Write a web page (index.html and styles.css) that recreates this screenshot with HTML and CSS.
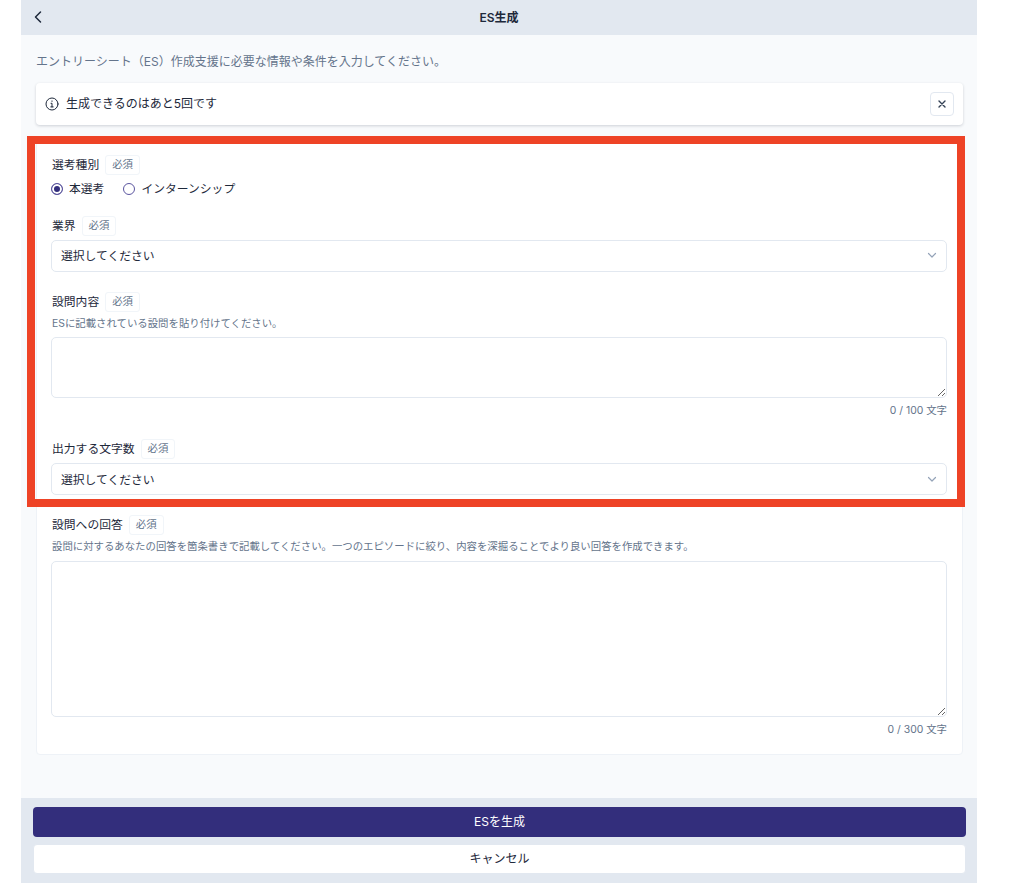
FILE: index.html
```html
<!DOCTYPE html>
<html lang="ja">
<head>
<meta charset="utf-8">
<title>ES生成</title>
<link rel="stylesheet" href="styles.css">
</head>
<body>
<div class="app">
  <header class="topbar">
    <button class="back" aria-label="戻る">
      <svg width="16" height="16" viewBox="0 0 16 16" fill="none" stroke="#1e293b" stroke-width="1.5" stroke-linecap="round" stroke-linejoin="round"><path d="M10.5 3 5.5 8l5 5"/></svg>
    </button>
    <h1 class="title">ES生成</h1>
  </header>
  <main class="content">
    <p class="intro">エントリーシート（ES）作成支援に必要な情報や条件を入力してください。</p>
    <div class="alert">
      <svg class="alert-icon" width="14" height="14" viewBox="0 0 14 14" fill="none" stroke="#1e293b" stroke-width="1" stroke-linecap="round" stroke-linejoin="round"><circle cx="7" cy="7" r="6"/><path d="M6 6.3H7v3.6M5.8 9.9h2.4"/><path d="M6.9 4.1h.2" stroke-width="1.2"/></svg>
      <span class="alert-text">生成できるのはあと5回です</span>
      <button class="close" aria-label="閉じる">
        <svg width="10" height="10" viewBox="0 0 10 10" fill="none" stroke="#334155" stroke-width="1.4" stroke-linecap="round"><path d="M2 2l6 6M8 2l-6 6"/></svg>
      </button>
    </div>
    <form class="card">
      <div class="field field-type">
        <div class="label-row"><span class="label">選考種別</span><span class="badge">必須</span></div>
        <div class="radios">
          <span class="radio radio-on"><span class="dot dot-on"></span>本選考</span>
          <span class="radio"><span class="dot"></span>インターンシップ</span>
        </div>
      </div>
      <div class="field">
        <div class="label-row"><span class="label">業界</span><span class="badge">必須</span></div>
        <div class="select select-first">
          <span>選択してください</span>
          <svg class="chevron" width="10" height="10" viewBox="0 0 10 10" fill="none" stroke="#94a3b8" stroke-width="1.2" stroke-linecap="round" stroke-linejoin="round"><path d="M1.5 3.5 5 7l3.5-3.5"/></svg>
        </div>
      </div>
      <div class="field field-count">
        <div class="label-row"><span class="label">設問内容</span><span class="badge">必須</span></div>
        <p class="help">ESに記載されている設問を貼り付けてください。</p>
        <textarea class="area area-short"></textarea>
        <p class="count">0 / 100 文字</p>
      </div>
      <div class="field">
        <div class="label-row"><span class="label">出力する文字数</span><span class="badge">必須</span></div>
        <div class="select">
          <span>選択してください</span>
          <svg class="chevron" width="10" height="10" viewBox="0 0 10 10" fill="none" stroke="#94a3b8" stroke-width="1.2" stroke-linecap="round" stroke-linejoin="round"><path d="M1.5 3.5 5 7l3.5-3.5"/></svg>
        </div>
      </div>
      <div class="field">
        <div class="label-row"><span class="label">設問への回答</span><span class="badge">必須</span></div>
        <p class="help">設問に対するあなたの回答を箇条書きで記載してください。一つのエピソードに絞り、内容を深掘ることでより良い回答を作成できます。</p>
        <textarea class="area area-tall"></textarea>
        <p class="count">0 / 300 文字</p>
      </div>
    </form>
  </main>
  <footer class="footer">
    <button class="btn btn-primary">ESを生成</button>
    <button class="btn btn-secondary">キャンセル</button>
  </footer>
</div>
<div class="highlight"></div>
</body>
</html>
```
FILE: styles.css
```css
* { box-sizing: border-box; }
html, body { margin: 0; padding: 0; background: #fff; }
body {
  font-family: Inter, "Noto Sans CJK JP", sans-serif;
  color: #1e293b;
  height: 883px;
  overflow: hidden;
  position: relative;
}
p, h1 { margin: 0; }
.app {
  width: 956px;
  height: 883px;
  margin-left: 21px;
  background: #f8fafc;
  display: flex;
  flex-direction: column;
}
.topbar {
  height: 35px;
  flex: none;
  background: #e2e8f0;
  display: flex;
  align-items: center;
  justify-content: center;
  position: relative;
}
.back {
  position: absolute;
  left: 9px;
  top: 9px;
  width: 16px;
  height: 16px;
  padding: 0;
  border: 0;
  background: none;
  display: flex;
}
.title { font-size: 12px; font-weight: 600; line-height: 18px; color: #1e293b; }
.content { flex: 1; padding: 18px 14px 0 15px; }
.intro { font-size: 12px; line-height: 18px; color: #64748b; }
.alert {
  margin-top: 12px;
  height: 42px;
  background: #fff;
  border-radius: 4px;
  box-shadow: 0 1px 3px rgba(15, 23, 42, .18);
  display: flex;
  align-items: center;
  padding: 0 9px 0 9px;
}
.alert-icon { flex: none; margin-right: 7px; }
.alert-text { font-size: 12px; line-height: 18px; flex: 1; }
.close {
  width: 24px;
  height: 24px;
  padding: 0;
  background: #fff;
  border: 1px solid #e2e8f0;
  border-radius: 4px;
  display: flex;
  align-items: center;
  justify-content: center;
}
.card {
  margin-top: 12px;
  height: 618px;
  background: #fff;
  border: 1px solid #eef2f7;
  border-radius: 4px;
  padding: 17px 15px 0 14px;
}
.field { margin-bottom: 20px; }
.field-type { margin-bottom: 17px; }
.field-count { margin-bottom: 21px; }
.label-row { display: flex; align-items: center; height: 20px; gap: 6px; padding-left: 1px; }
.label { font-size: 11.8px; line-height: 16px; font-weight: 400; color: #1e293b; }
.badge {
  font-size: 10.4px;
  line-height: 14px;
  height: 20px;
  padding: 2px 6px;
  color: #64748b;
  border: 1px solid #f1f5f9;
  border-radius: 3px;
}
.radios { display: flex; align-items: center; gap: 19px; height: 20px; margin-top: 4px; }
.radio { display: flex; align-items: center; gap: 6px; font-size: 11.8px; line-height: 18px; }
.dot {
  width: 12px;
  height: 12px;
  flex: none;
  border: 1px solid #5b55a0;
  border-radius: 50%;
  background: #fff;
}
.dot-on { background: #332e7c; box-shadow: inset 0 0 0 2px #fff; }
.select {
  margin-top: 4px;
  height: 32px;
  background: #fff;
  border: 1px solid #e2e8f0;
  border-radius: 5px;
  padding: 0 9px 2px 9px;
  display: flex;
  align-items: center;
  justify-content: space-between;
  font-size: 11.8px;
}
.select-first { padding-bottom: 4px; }
.chevron { margin-top: 2px; }
.help { margin-top: 4px; padding-left: 1px; font-size: 10.4px; line-height: 16px; color: #64748b; }
.area {
  display: block;
  width: 100%;
  margin-top: 5px;
  background: #fff;
  border: 1px solid #e2e8f0;
  border-radius: 5px;
  outline: none;
}
.area-short { height: 61px; }
.area-tall { height: 156px; margin-top: 6px; }
.count { margin-top: 6px; text-align: right; font-size: 10.4px; line-height: 14px; color: #64748b; }
.footer {
  flex: none;
  height: 85px;
  background: #e2e8f0;
  padding: 9px 11px 0 12px;
  display: flex;
  flex-direction: column;
  gap: 7px;
}
.btn {
  height: 30px;
  border-radius: 4px;
  border: 0;
  font-family: inherit;
  font-size: 12px;
  font-weight: 400;
  line-height: 16px;
  padding: 0;
}
.btn-primary { background: #332e7c; color: #fff; }
.btn-secondary { background: #fff; color: #1e293b; border: 1px solid #e2e8f0; }
.highlight {
  position: absolute;
  left: 27px;
  top: 136px;
  width: 938px;
  height: 371px;
  border: 8px solid #ee4326;
  pointer-events: none;
}
```
